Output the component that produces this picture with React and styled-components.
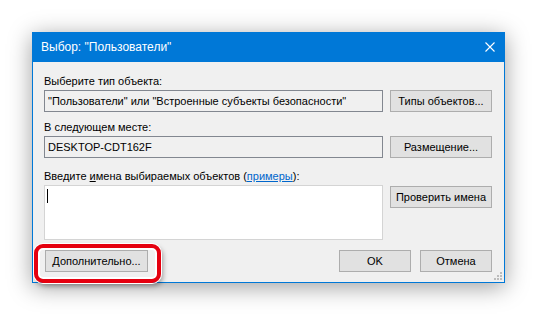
import React from "react";
import styled, { createGlobalStyle } from "styled-components";

const Global = createGlobalStyle`
  html, body {
    margin: 0;
    padding: 0;
    background: #fff;
  }
  body {
    font-family: "Segoe UI", "Liberation Sans", Arial, sans-serif;
    font-size: 11px;
    color: #000;
  }
`;

const Page = styled.div`
  width: 538px;
  height: 315px;
  padding: 32px 0 0 32px;
  box-sizing: border-box;
`;

const Window = styled.div`
  position: relative;
  width: 473px;
  height: 251px;
  display: flex;
  flex-direction: column;
  background: #f0f0f0;
  border: 1px solid #0078d7;
  border-top: none;
  box-sizing: border-box;
  box-shadow: 0 4px 22px rgba(0, 0, 0, 0.38);
`;

const TitleBar = styled.div`
  height: 30px;
  margin: 0 -1px;
  background: #0078d7;
  color: #fff;
  display: flex;
  align-items: center;
  justify-content: space-between;
  padding: 0 10px 0 9px;
  flex-shrink: 0;
`;

const Title = styled.span`
  font-size: 12px;
`;

const Client = styled.div`
  flex: 1;
  display: grid;
  grid-template-columns: 339px 102px;
  grid-auto-rows: min-content;
  column-gap: 7px;
  padding: 11px 0 0 11px;
  position: relative;
`;

const Label = styled.div`
  grid-column: 1 / 2;
  line-height: 16px;
  height: 16px;
  margin-top: ${(p) => p.$gap || 0}px;
  margin-bottom: 1px;
  white-space: nowrap;
`;

const Field = styled.div`
  height: 22px;
  box-sizing: border-box;
  border: 1px solid #828790;
  background: #f0f0f0;
  padding: 0 3px;
  display: flex;
  align-items: center;
  white-space: nowrap;
`;

const Names = styled.div`
  height: 55px;
  box-sizing: border-box;
  border: 1px solid #d4d4d4;
  background: #fff;
  padding: 3px 2px;
`;

const Caret = styled.div`
  width: 1px;
  height: 14px;
  background: #000;
`;

const Button = styled.div`
  height: 22px;
  width: ${(p) => p.$w || 102}px;
  box-sizing: border-box;
  border: 1px solid #adadad;
  background: #e1e1e1;
  display: flex;
  align-items: center;
  justify-content: center;
  white-space: nowrap;
  align-self: start;
  margin-top: ${(p) => p.$top || 0}px;
`;

const Link = styled.span`
  color: #0066cc;
  text-decoration: underline;
`;

const Accel = styled.span`
  text-decoration: underline;
`;

const Footer = styled.div`
  grid-column: 1 / 3;
  display: flex;
  align-items: center;
  margin-top: 10px;
  padding-left: 1px;
`;

const Spacer = styled.div`
  flex: 1;
`;

const FooterButtons = styled.div`
  display: flex;
  gap: 9px;
`;

const Grip = styled.svg`
  position: absolute;
  right: 2px;
  bottom: 2px;
`;

const Highlight = styled.div`
  position: absolute;
  left: 1px;
  top: 212px;
  width: 127px;
  height: 39px;
  box-sizing: border-box;
  border: 4px solid #e5000f;
  border-radius: 9px;
  box-shadow: inset 0 0 0 2px #fff, 0 0 0 1px #fff, 2px 3px 5px rgba(0, 0, 0, 0.35);
  pointer-events: none;
`;

function CloseIcon() {
  return (
    <svg width="10" height="10" viewBox="0 0 10 10">
      <path d="M0.5 0.5L9.5 9.5M9.5 0.5L0.5 9.5" stroke="#fff" strokeWidth="1.1" />
    </svg>
  );
}

export default function App() {
  return (
    <Page>
      <Global />
      <Window>
        <TitleBar>
          <Title>Выбор: "Пользователи"</Title>
          <CloseIcon />
        </TitleBar>
        <Client>
          <Label>Выберите тип объекта:</Label>
          <div />
          <Field>"Пользователи" или "Встроенные субъекты безопасности"</Field>
          <Button>Типы объектов...</Button>

          <Label $gap={7}>В следующем месте:</Label>
          <div />
          <Field>DESKTOP-CDT162F</Field>
          <Button>Размещение...</Button>

          <Label $gap={10}>
            Введите <Accel>и</Accel>мена выбираемых объектов (<Link>примеры</Link>):
          </Label>
          <div />
          <Names>
            <Caret />
          </Names>
          <Button $top={1}>Проверить имена</Button>

          <Footer>
            <Button $w={103}>Дополнительно...</Button>
            <Spacer />
            <FooterButtons>
              <Button $w={72}>OK</Button>
              <Button $w={72}>Отмена</Button>
            </FooterButtons>
          </Footer>
          <Grip width="8" height="8" viewBox="0 0 8 8">
            <rect x="6" y="0" width="2" height="2" fill="#bcbcbc" />
            <rect x="3" y="3" width="2" height="2" fill="#bcbcbc" />
            <rect x="6" y="3" width="2" height="2" fill="#bcbcbc" />
            <rect x="0" y="6" width="2" height="2" fill="#bcbcbc" />
            <rect x="3" y="6" width="2" height="2" fill="#bcbcbc" />
            <rect x="6" y="6" width="2" height="2" fill="#bcbcbc" />
          </Grip>
        </Client>
        <Highlight />
      </Window>
    </Page>
  );
}
